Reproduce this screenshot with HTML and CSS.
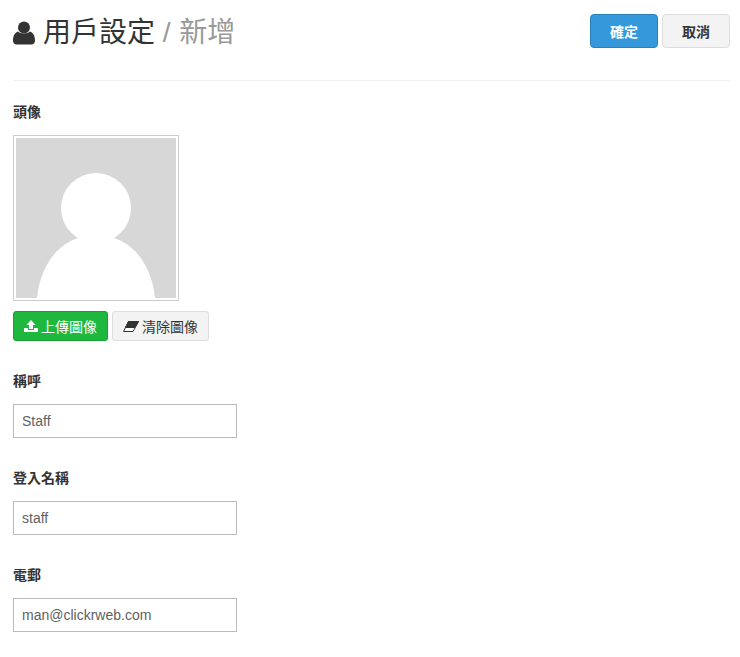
FILE: index.html
```html
<!DOCTYPE html>
<html lang="zh-Hant">
<head>
    <meta charset="UTF-8">
    <title>用戶設定</title>
    <link rel="stylesheet" href="styles.css">
</head>
<body>
    <div class="container">
        <header class="page-header">
            <h1 class="page-title">
                <svg class="title-icon" viewBox="0 0 22 24" width="22" height="24">
                    <circle cx="11" cy="6.5" r="6" fill="#333"/>
                    <path d="M0 19.5C0 14.5 2 11.5 5 10.5C7 13 15 13 17 10.5C20 11.5 22 14.5 22 19.5C22 22 20.5 23.5 18.5 23.5H3.5C1.500 23.500 0 22 0 19.500Z" fill="#333"/>
                </svg>
                <span class="title-text">用戶設定 <small>/ 新增</small></span>
            </h1>
            <div class="header-actions">
                <button class="btn btn-primary">確定</button>
                <button class="btn btn-default">取消</button>
            </div>
        </header>

        <div class="form-group">
            <label>頭像</label>
            <div class="thumbnail">
                <svg viewBox="0 0 160 160" width="160" height="160">
                    <rect width="160" height="160" fill="#d7d7d7"/>
                    <circle cx="80" cy="70" r="35" fill="#fff"/>
                    <path d="M21 160C25 122 48 97 80 97C112 97 135 122 139 160Z" fill="#fff"/>
                </svg>
            </div>
            <div class="avatar-actions">
                <button class="btn-sm btn-success">
                    <svg viewBox="0 0 14 12" width="14" height="12">
                        <path d="M7 0L11.500 5H9V9H5V5H2.500Z" fill="#fff"/>
                        <path d="M0 8H4V10H10V8H14V12H0Z" fill="#fff"/>
                    </svg>
                    上傳圖像
                </button>
                <button class="btn-sm btn-default">
                    <svg viewBox="0 0 16 11" width="16" height="11">
                        <path d="M5.500 0.500H15.500L10 10.500H0.500Z" fill="#fff" stroke="#333"/>
                        <path d="M5.500 0.500H15.500L12 6.500H2.500Z" fill="#333" stroke="#333"/>
                    </svg>
                    清除圖像
                </button>
            </div>
        </div>

        <div class="form-group">
            <label>稱呼</label>
            <input class="form-control" type="text" value="Staff">
        </div>
        <div class="form-group">
            <label>登入名稱</label>
            <input class="form-control" type="text" value="staff">
        </div>
        <div class="form-group">
            <label>電郵</label>
            <input class="form-control" type="text" value="man@clickrweb.com">
        </div>
    </div>
</body>
</html>
```

FILE: styles.css
```css
* {
    box-sizing: border-box;
}

body {
    margin: 0;
    background: #fff;
    color: #333;
    font-family: "Liberation Sans", "Noto Sans CJK TC", sans-serif;
    font-size: 14px;
    line-height: 20px;
}

.container {
    padding: 14px 10px 0 13px;
}

.page-header {
    display: flex;
    justify-content: space-between;
    align-items: flex-start;
    height: 67px;
    border-bottom: 1px solid #eee;
    margin-bottom: 21px;
}

.page-title {
    display: flex;
    align-items: center;
    gap: 8px;
    margin: 0;
    font-size: 28px;
    line-height: 34px;
    font-weight: 400;
}

.title-icon {
    margin-top: 1px;
}

.title-text {
    padding-top: 2px;
}

.page-title small {
    font-size: 28px;
    color: #999;
    word-spacing: 1px;
}

.header-actions {
    display: flex;
    gap: 4px;
}

.btn {
    width: 68px;
    height: 34px;
    padding: 0;
    border-radius: 4px;
    font: bold 14px "Liberation Sans", "Noto Sans CJK TC", sans-serif;
}

.btn-primary {
    background: #3498db;
    border: 1px solid #2a80b9;
    color: #fff;
}

.btn-default {
    background: #f3f3f3;
    border: 1px solid #ddd;
    color: #333;
}

.form-group {
    margin-bottom: 30px;
}

.form-group label {
    display: block;
    font-weight: bold;
    margin-bottom: 13px;
}

.thumbnail {
    width: 166px;
    height: 166px;
    padding: 2px;
    border: 1px solid #ccc;
}

.thumbnail svg {
    display: block;
}

.avatar-actions {
    display: flex;
    gap: 4px;
    margin-top: 10px;
}

.btn-sm {
    display: flex;
    align-items: center;
    justify-content: center;
    gap: 3px;
    height: 30px;
    padding: 0 10px;
    border-radius: 3px;
    font: 14px "Liberation Sans", "Noto Sans CJK TC", sans-serif;
}

.btn-success {
    background: #1eb83f;
    border: 1px solid #18a035;
    color: #fff;
}

.form-control {
    display: block;
    width: 224px;
    height: 34px;
    padding: 0 8px;
    border: 1px solid #bbb;
    border-radius: 0;
    color: #5f5f5f;
    font: 14px "Liberation Sans", "Noto Sans CJK TC", sans-serif;
}
```
